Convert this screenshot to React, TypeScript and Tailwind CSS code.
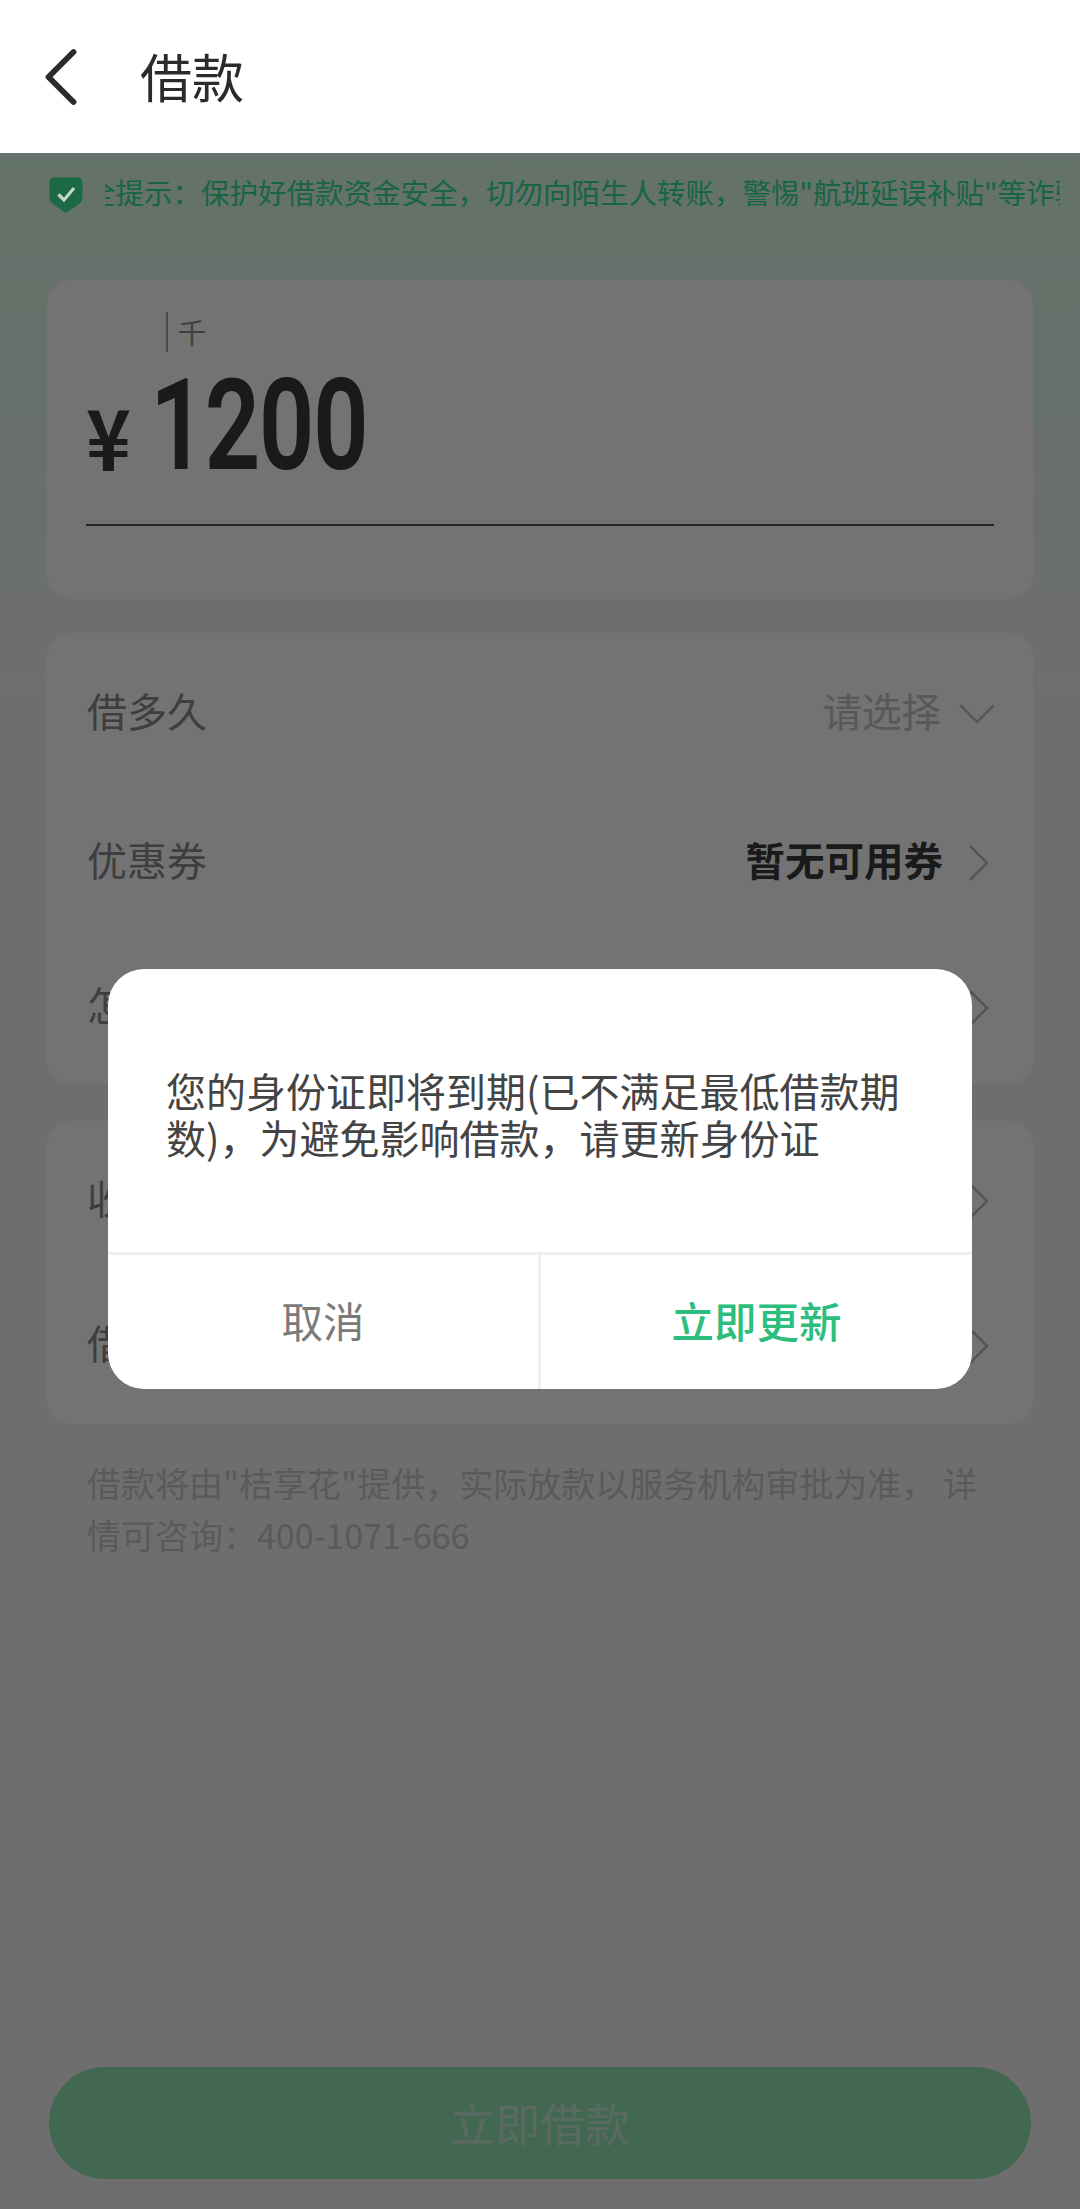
import { ChevronDown, ChevronLeft, ChevronRight } from 'lucide-react'

const font = 'font-["Noto_Sans_CJK_SC","Liberation_Sans",sans-serif]'

// sits above the dim layer: its check mark stays brighter than the layer allows
function ShieldIcon() {
  return (
    <svg viewBox="0 0 34 36" className="relative z-10 mt-[4px] h-[36px] w-[34px] shrink-0">
      <path d="M6 0.500h22c3 0 5.500 1.500 5.500 4.500v15c0 3-1 5-3.500 7L18.500 35c-1 .7-2 .7-3 0L4 27C1.500 25 .5 23 .5 20V5C.5 2 3 .5 6 .5z" fill="#1c6a45" />
      <path d="M9.500 17.500l5.500 5.500 10-12" fill="none" stroke="#c4d6ca" strokeWidth="3.200" />
    </svg>
  )
}

function Row({ label, value, className }: { label: string; value?: string; className: string }) {
  return (
    <div className={`flex h-[64px] items-center justify-between ${className}`}>
      <span className="mb-[8px] text-[40px] leading-[48px] text-[#8a8a8a]">{label}</span>
      <div className="flex items-center gap-[4px]">
        {value ? <span className="mb-[8px] text-[39.500px] leading-[48px] font-bold text-[#3a3a3a]">{value}</span> : null}
        <ChevronRight className="mr-[-18px] size-[64px] text-[#bdbdbd]" strokeWidth={0.950} />
      </div>
    </div>
  )
}

export default function App() {
  return (
    <div className={`flex h-[2209px] w-[1080px] flex-col overflow-hidden bg-white ${font}`}>
      <header className="flex h-[153px] shrink-0 items-center pl-[11px]">
        <ChevronLeft className="size-[100px] text-[#2b2b2b]" strokeWidth={1.400} />
        <h1 className="mb-[2px] ml-[29px] text-[52px] leading-none text-[#2b2b2b]">借款</h1>
      </header>

      <main className="relative flex flex-1 flex-col bg-[linear-gradient(180deg,#dcfdea_0px,#f4f4f4_560px)]">
        <div className="flex h-[80px] items-center pl-[49px] pr-[20px]">
          <ShieldIcon />
          <div className="ml-[22px] flex-1 overflow-hidden">
            <p className="mb-[2px] ml-[-18px] whitespace-nowrap text-[28.500px] leading-[40px] text-[#35e098]">
              全提示：保护好借款资金安全，切勿向陌生人转账，警惕"航班延误补贴"等诈骗
            </p>
          </div>
        </div>

        <section className="mx-[47px] mt-[47px] flex h-[319px] flex-col rounded-[24px] bg-white px-[39px] pt-[32px]">
          <div className="ml-[80px] flex h-[40px] items-center">
            <span className="h-[40px] w-[2px] bg-[#a8a8a8]" />
            <span className="ml-[10px] text-[28px] leading-none text-[#8c8c8c]">千</span>
          </div>
          <div className="mt-[24px] flex h-[110px] items-center">
            <span className="mt-[8px] w-[44px] scale-y-[1.1] text-[76px] leading-none font-bold text-[#3a3a3a]">¥</span>
            <span className="mb-[10px] ml-[21px] origin-left scale-x-[0.77] font-['Roboto'] text-[124px] leading-none font-medium text-[#3a3a3a] [-webkit-text-stroke:2px_#3a3a3a]">
              1200
            </span>
          </div>
          <div className="mt-[38px] h-[2px] bg-[#555555]" />
        </section>

        <section className="mx-[47px] mt-[34px] flex h-[451px] flex-col rounded-[24px] bg-white px-[40px] pt-[49px]">
          <div className="flex h-[64px] items-center justify-between">
            <span className="mb-[8px] text-[40px] leading-[48px] text-[#8a8a8a]">借多久</span>
            <div className="flex items-center gap-[4px]">
              <span className="mb-[8px] text-[39.500px] leading-[48px] text-[#c4c4c4]">请选择</span>
              <ChevronDown className="mr-[-16px] size-[64px] text-[#c4c4c4]" strokeWidth={0.950} />
            </div>
          </div>
          <Row label="优惠券" value="暂无可用券" className="mt-[85px]" />
          <Row label="怎么还" className="mt-[81px]" />
        </section>

        <section className="mx-[47px] mt-[37px] flex h-[303px] flex-col rounded-[24px] bg-white px-[40px] pt-[48px]">
          <Row label="收款账户" className="" />
          <Row label="借款用途" className="mt-[81px]" />
        </section>

        <p className="mx-[87px] mt-[33px] text-[34px] leading-[52px] text-[#c8c8c8]">
          借款将由"桔享花"提供，实际放款以服务机构审批为准， 详<br />情可咨询：400-1071-666
        </p>

        <button className="mx-[49px] mb-[30px] mt-auto h-[112px] rounded-full bg-[#93e7b6] text-[45px] text-[#c8ecd8]">
          立即借款
        </button>

        <div className="absolute inset-0 flex items-center justify-center bg-black/55 pb-[4px]">
          <div className="flex h-[420px] w-[864px] flex-col overflow-hidden rounded-[36px] bg-white">
            <p className="flex flex-1 items-center border-b-[3px] border-[#eeeeee] px-[58px] pt-[6px] text-[40px] leading-[47px] text-[#444444]">
              您的身份证即将到期(已不满足最低借款期数)，为避免影响借款，请更新身份证
            </p>
            <div className="flex h-[134px]">
              <button className="w-[433px] border-r-[3px] border-[#eeeeee] pb-[4px] text-[41.500px] text-[#7a7a7a]">取消</button>
              <button className="flex-1 pb-[4px] text-[42.500px] font-medium text-[#2dbd7c]">立即更新</button>
            </div>
          </div>
        </div>
      </main>
    </div>
  )
}
